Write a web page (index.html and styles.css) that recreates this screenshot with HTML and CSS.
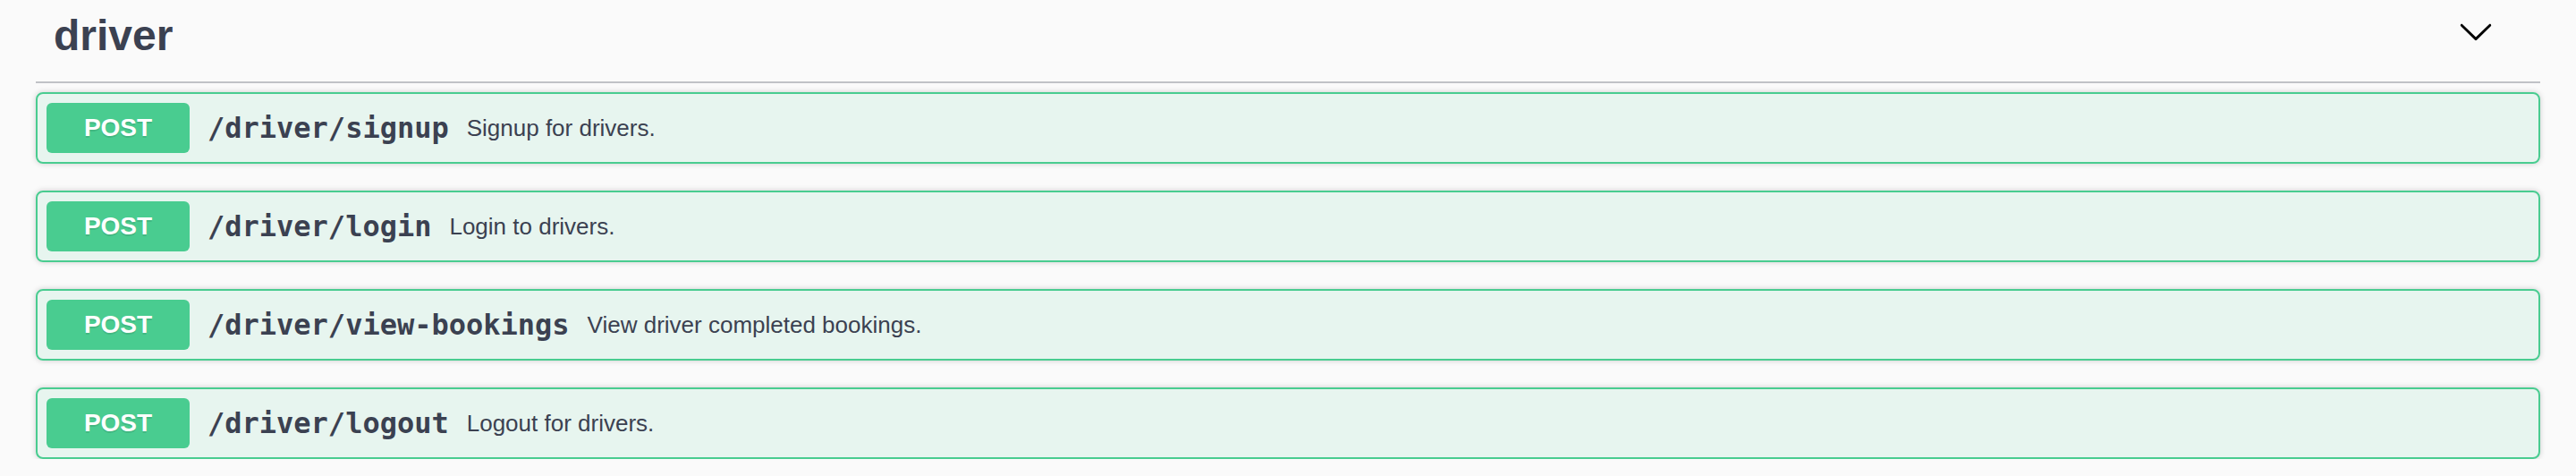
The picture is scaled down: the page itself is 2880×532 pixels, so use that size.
FILE: index.html
```html
<!DOCTYPE html>
<html lang="en">
<head>
<meta charset="utf-8">
<title>driver</title>
<link rel="stylesheet" href="styles.css">
</head>
<body>
<div class="wrapper">
  <section class="tag-section">
    <h3 class="opblock-tag">
      <a class="tag-name"><span>driver</span></a>
      <small class="tag-desc"></small>
      <button class="expand-operation" type="button" aria-label="Collapse operation">
        <svg class="arrow" width="40" height="40" viewBox="0 0 20 20" aria-hidden="true">
          <path d="M17.418 6.109c.272-.268.709-.268.979 0s.271.701 0 .969l-7.908 7.83c-.27.268-.707.268-.979 0l-7.908-7.83c-.27-.268-.27-.701 0-.969.271-.268.709-.268.979 0L10 13.25l7.418-7.141z"/>
        </svg>
      </button>
    </h3>
    <div class="operations">
      <div class="opblock opblock-post">
        <div class="opblock-summary">
          <span class="method">POST</span>
          <span class="path">/driver/signup</span>
          <div class="description">Signup for drivers.</div>
        </div>
      </div>
      <div class="opblock opblock-post">
        <div class="opblock-summary">
          <span class="method">POST</span>
          <span class="path">/driver/login</span>
          <div class="description">Login to drivers.</div>
        </div>
      </div>
      <div class="opblock opblock-post">
        <div class="opblock-summary">
          <span class="method">POST</span>
          <span class="path">/driver/view-bookings</span>
          <div class="description">View driver completed bookings.</div>
        </div>
      </div>
      <div class="opblock opblock-post">
        <div class="opblock-summary">
          <span class="method">POST</span>
          <span class="path">/driver/logout</span>
          <div class="description">Logout for drivers.</div>
        </div>
      </div>
    </div>
  </section>
</div>
</body>
</html>
```
FILE: styles.css
```css
html, body {
  margin: 0;
  padding: 0;
  background: #fafafa;
}

body {
  font-family: "Liberation Sans", Arial, Helvetica, sans-serif;
  color: #3b4151;
}

.wrapper {
  padding: 0 40px;
  box-sizing: border-box;
}

.tag-section {
  display: flex;
  flex-direction: column;
}

.opblock-tag {
  display: flex;
  align-items: center;
  margin: 0 0 10px;
  padding: 12px 40px 24px 20px;
  border-bottom: 2px solid rgba(59, 65, 81, 0.3);
  font-family: "Liberation Sans", Arial, Helvetica, sans-serif;
  font-size: 48px;
  font-weight: 700;
  line-height: 55px;
  color: #3b4151;
}

.tag-name {
  color: inherit;
  text-decoration: none;
}

.tag-desc {
  flex: 1;
}

.expand-operation {
  display: flex;
  align-items: center;
  margin: 0 0 10px;
  padding: 2px 12px;
  border: none;
  background: none;
  cursor: pointer;
}

.arrow {
  display: block;
  width: 40px;
  height: 40px;
  fill: #000;
}

.operations {
  display: flex;
  flex-direction: column;
  gap: 30px;
}

.opblock {
  border: 2px solid #49cc90;
  border-radius: 8px;
  background: rgba(73, 204, 144, 0.1);
  box-shadow: 0 0 6px rgba(0, 0, 0, 0.19);
}

.opblock-summary {
  display: flex;
  align-items: center;
  padding: 10px;
}

.method {
  min-width: 160px;
  padding: 12px 0;
  border-radius: 6px;
  background: #49cc90;
  color: #fff;
  font-family: "Liberation Sans", Arial, Helvetica, sans-serif;
  font-size: 28px;
  font-weight: 700;
  line-height: 32px;
  text-align: center;
  text-shadow: 0 2px 0 rgba(0, 0, 0, 0.1);
}

.path {
  display: flex;
  align-items: center;
  padding: 0 20px;
  font-family: "DejaVu Sans Mono", "Liberation Mono", monospace;
  font-size: 32px;
  font-weight: 700;
  color: #3b4151;
}

.description {
  flex: 1 1 auto;
  font-family: "Liberation Sans", Arial, Helvetica, sans-serif;
  font-size: 26px;
  color: #3b4151;
}
```
